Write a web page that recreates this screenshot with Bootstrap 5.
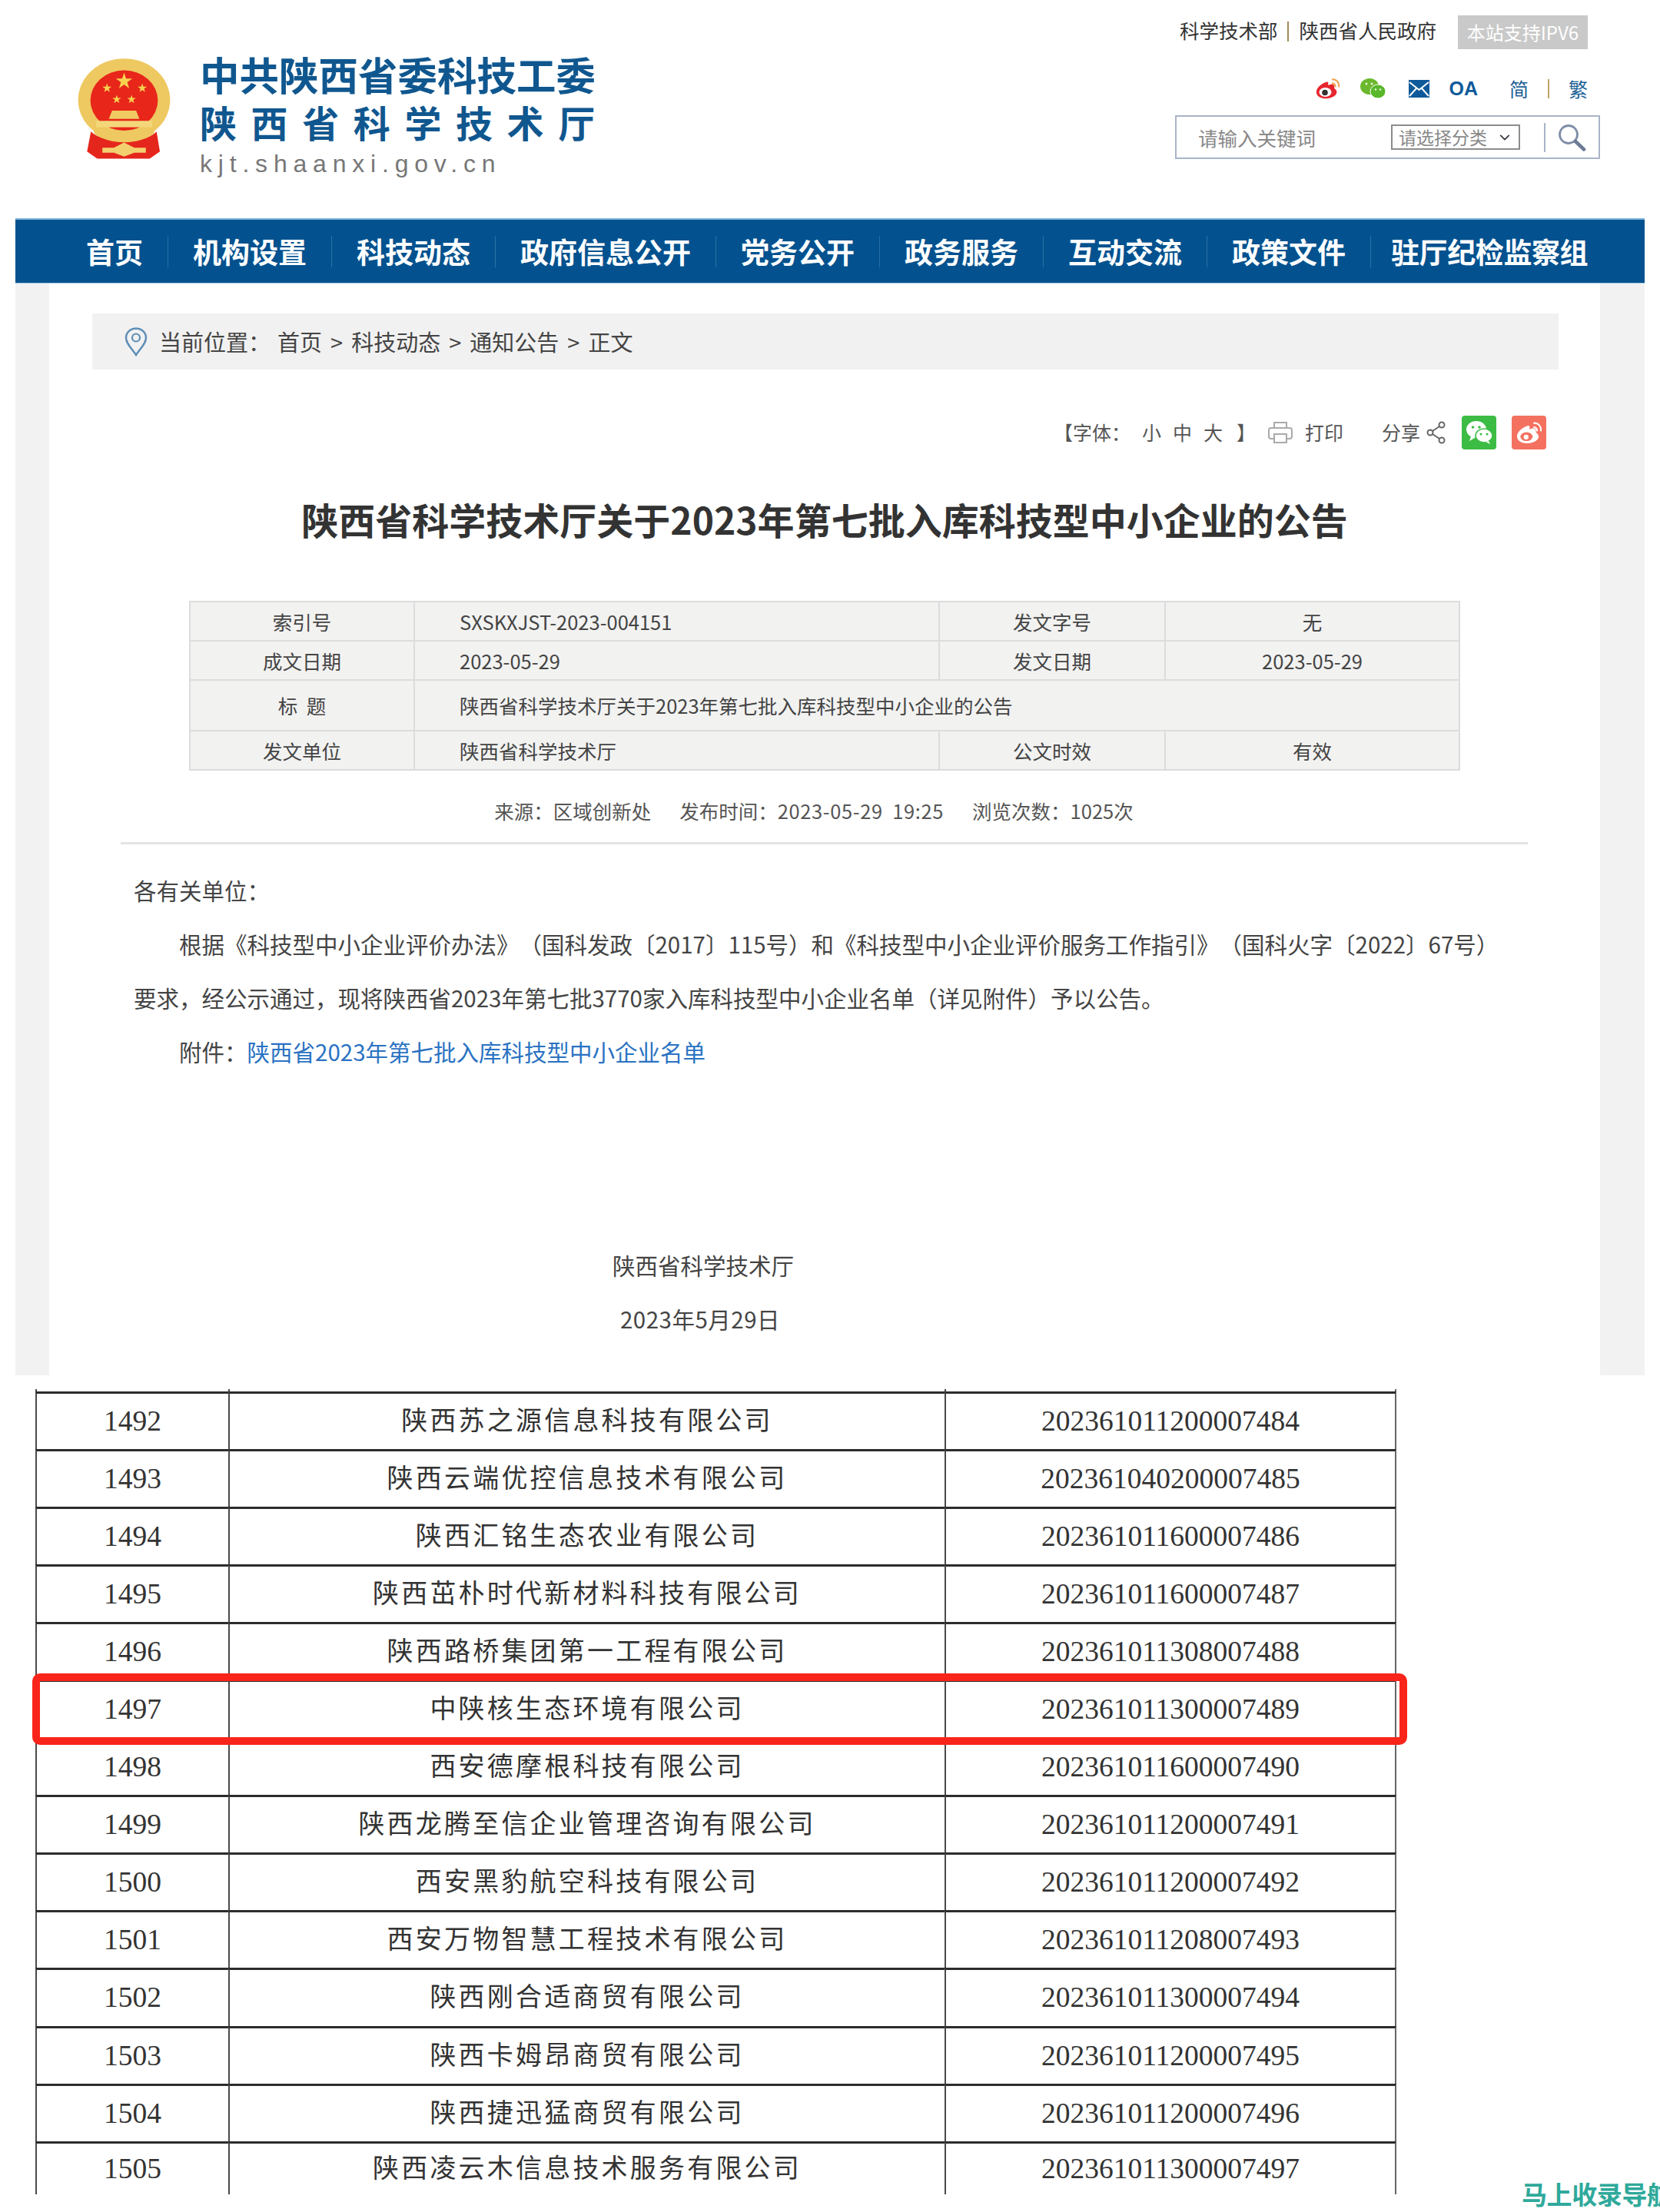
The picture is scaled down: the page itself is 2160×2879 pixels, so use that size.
<!DOCTYPE html>
<html lang="zh-CN">
<head>
<meta charset="utf-8">
<title>陕西省科学技术厅</title>
<link href="https://cdn.jsdelivr.net/npm/bootstrap@5.3.0/dist/css/bootstrap.min.css" rel="stylesheet">
<style>
html,body{margin:0;background:#fff}
body{font-family:"Noto Sans CJK SC","Liberation Sans",sans-serif;color:#444;text-spacing-trim:space-all}
a{text-decoration:none;color:inherit}
.pg{position:relative;width:2160px;height:2879px;overflow:hidden;background:#fff}
.hd{height:284px;padding:0 78px 0 100px}
.logo{padding-top:73px;gap:37px}
.emb{width:123px;height:138px;display:block}
.lg1{font-size:51.5px;line-height:51px;font-weight:700;color:#10578f;white-space:nowrap;margin-top:-3px}
.lg2{font-size:48px;line-height:50px;font-weight:700;color:#10578f;letter-spacing:18.6px;white-space:nowrap;margin-top:12px}
.lg3{font-family:"Liberation Sans",sans-serif;font-size:32px;line-height:36px;color:#777;letter-spacing:7.8px;margin-top:12px;white-space:nowrap}
.tr{width:553px}
.r1{height:44px;margin-top:20px;padding-right:16px;gap:28px;font-size:25.5px;color:#333}
.r1 .lnk{margin-top:-5px}
.r1 .bar{display:inline-block;width:2px;height:26px;background:#a08c5a;margin:0 13px;vertical-align:-4px}
.ipv{background:#c9c9c9;color:#fff;font-size:24px;line-height:44px;height:44px;width:169px;padding:0;border:0;border-radius:0}
.r2{height:30px;margin-top:36px;padding-right:16px;color:#1d5f95;font-size:25px;line-height:30px}
.r2 .ml-m{margin-left:25px}
.r2 .ml-l{margin-left:30px}
.oa{font-family:"Liberation Sans",sans-serif;font-weight:700;font-size:25px;color:#0f5a9a;line-height:30px;margin-left:25px}
.r2 .jt{margin-left:41px}
.bar2{width:2px;height:25px;background:#c0a468;margin:0 25px}
.sbox{height:57px;margin-top:20px;border:2px solid #a9b4c8;padding-left:28px}
.sinp{border:0;padding:0;font-size:25.5px;color:#888;width:250px;height:50px;border-radius:0;box-shadow:none}
.sinp::placeholder{color:#888;opacity:1}
.ssel{width:168px;height:33px;font-size:23px;line-height:27px;color:#888;border:2px solid #8c8c8c;border-radius:0;padding:0 26px 0 8px;background-position:right 8px center;background-size:20px 14px;margin-left:1px}
.ssep{width:2px;height:38px;background:#a9b4c8;margin-left:31px}
.sic{margin-left:15px;display:block}
.mnav{margin:0 20px;height:85px;background:#03528f;border-top:2px solid #7db5de;border-bottom:1px solid #9cc6e4;padding-left:60px}
.mnav a{font-size:37px;line-height:41px;font-weight:700;color:#fff;padding:0 32px;border-left:1px solid #2b6fa5;white-space:nowrap}
.mnav a:first-child{border-left:0}
.mnav a:last-child{padding-left:26px;letter-spacing:-.4px}
.side{margin:0 20px;background:#f2f2f2;padding:0 58px 0 44px}
.inner{background:#fff;height:1421px;padding-top:39px}
.crumb{margin:0 54px 0 56px;height:73px;background:#f1f1f1;padding-left:42px;font-size:29px;color:#444}
.crumb svg{margin-right:15px}
.crumb .breadcrumb{--bs-breadcrumb-margin-bottom:0;--bs-breadcrumb-item-padding-x:11px;--bs-breadcrumb-divider-color:#444;--bs-breadcrumb-item-active-color:#444;margin-left:9px}
.crumb .lab{white-space:nowrap}
.tools{height:44px;margin:60px 70px 0 0;font-size:25px;color:#555}
.tools .fs span{margin-left:15px}
.tools .fs span.cl{margin-left:18px}
.sq{width:45px;height:44px;border-radius:4px;display:flex;align-items:center;justify-content:center}
.sq.g{background:#3cbc44;margin-left:20px}
.sq.r{background:#f47160;margin-left:20px}
.ttl{font-size:48px;line-height:60px;font-weight:700;color:#333;margin:60px 0 0;text-align:center;white-space:nowrap}
.info{width:1652px;margin:77px 0 0 182px;table-layout:fixed;border-collapse:collapse;background:#f2f2f1;font-size:25.5px;color:#444}
.info td{border:2px solid #dcdcdc;padding:0;text-align:center;height:51px;vertical-align:middle;line-height:30px}
.info td.lf{text-align:left;padding-left:58px}
.info tr.tall td{height:66px}
.meta{height:36px;line-height:36px;margin-top:34px;margin-right:28px;font-size:25.5px;color:#555;gap:37px}
.meta .ts{letter-spacing:.6px}
.dv{margin:23px 94px 0 93px;border:0;border-top:3px solid #e4e4e4;opacity:1}
.art{padding:24px 0 0 110px;font-size:29.5px;line-height:70px;color:#444}
.art p{margin:0;white-space:nowrap}
.art .ind{margin-left:59px}
.art a{color:#2a72c3}
.art .sign{margin:208px 426px 0 0;text-align:center}
.art .sdate{margin-right:434px;text-align:center;letter-spacing:.5px}
.dw{margin:18px 0 0 46px;width:1771px}
.dtab{width:1771px;table-layout:fixed;border-collapse:separate;border-spacing:0;font-family:"Liberation Serif","Noto Sans CJK SC",serif;font-size:37.5px;color:#333;margin:0;--bs-table-bg:transparent}
.dtab td{padding:0;text-align:center;vertical-align:middle;height:75.05px;border:0;border-left:2px solid #4a4a4a;border-top:3px solid #2c2c2c;line-height:44px;background:transparent;box-shadow:none}
.dtab td:last-child{border-right:2px solid #666}
.dtab tr.cap td{height:3px;border-top:0;line-height:0;font-size:0}
.dtab tr.end td{height:69px}
.dtab .nm{font-size:34px;letter-spacing:3.2px}
.hl{position:absolute;left:42px;top:2178px;width:1789px;height:93px;border:10px solid #f9251a;border-radius:10px;pointer-events:none}
.wm{position:absolute;left:1980px;top:2835px;font-size:33px;line-height:40px;font-weight:700;color:#2fa99b;white-space:nowrap;letter-spacing:-.4px}
</style>
</head>
<body>
<div class="pg">
<svg width="0" height="0" class="position-absolute"><defs><polygon id="st" points="0,-1 .2245,-.309 .951,-.309 .363,.118 .588,.809 0,.382 -.588,.809 -.363,.118 -.951,-.309 -.2245,-.309"/></defs></svg>

<header class="hd d-flex justify-content-between align-items-start">
  <div class="logo d-flex align-items-start">
    <svg class="emb" viewBox="60 69 370 410" aria-hidden="true">
      <ellipse cx="245" cy="238" rx="180" ry="162" fill="#eec860"/>
      <ellipse cx="245" cy="240" rx="132" ry="118" fill="#e8261a"/>
      <path d="M115 362 L100 440 L140 468 H345 L385 440 L372 362 C330 410 160 410 115 362Z" fill="#e5261c"/>
      <g fill="#f7d250">
        <use href="#st" transform="translate(245 165) scale(34)"/>
        <use href="#st" transform="translate(178 192) scale(19)"/>
        <use href="#st" transform="translate(316 192) scale(19)"/>
        <use href="#st" transform="translate(216 236) scale(18)"/>
        <use href="#st" transform="translate(274 236) scale(18)"/>
      </g>
      <path d="M185 312 L198 280 H292 L305 312Z" fill="#efcb62"/>
      <rect x="135" y="320" width="220" height="25" fill="#f3d77a"/>
      <path d="M118 338 C165 405 325 405 372 338 L360 372 C300 415 190 415 130 372Z" fill="#eec860"/>
      <path d="M205 385 C225 360 265 360 285 385 L270 402 H220Z" fill="#eec860"/>
      <path d="M160 425 H205 L245 405 L285 425 H330 V445 H285 L245 460 L205 445 H160Z" fill="#f2d070"/>
    </svg>
    <div>
      <div class="lg1">中共陕西省委科技工委</div>
      <div class="lg2">陕西省科学技术厅</div>
      <div class="lg3">kjt.shaanxi.gov.cn</div>
    </div>
  </div>
  <div class="tr">
    <div class="r1 d-flex justify-content-end align-items-center">
      <div class="lnk text-nowrap"><a href="#">科学技术部</a><span class="bar"></span><a href="#">陕西省人民政府</a></div>
      <button type="button" class="btn ipv">本站支持IPV6</button>
    </div>
    <div class="r2 d-flex justify-content-end align-items-center">
      <svg width="34" height="28" viewBox="0 0 34 28" aria-hidden="true"><path d="M14 6C6 9 1 15 2 20c1 6 9 8 15 7 8-1 13-6 11-10-1-2-3-3-3-4 1-3-1-5-5-4-2 1-3 1-3 0 1-3 0-4.500-3-3Z" fill="#e6262e"/><ellipse cx="13.500" cy="19" rx="8" ry="6" fill="#fff"/><circle cx="13" cy="19.500" r="3.800" fill="#333"/><path d="M22 2.500c6-1 10 4 9 10M22 7.500c3-.5 5 2 4.500 5" fill="none" stroke="#f0a452" stroke-width="2.200"/></svg>
      <svg class="ml-m" width="33" height="27" viewBox="0 0 33 27" aria-hidden="true"><ellipse cx="12" cy="10.500" rx="12" ry="10.500" fill="#6cb82e"/><ellipse cx="23" cy="17" rx="10" ry="9" fill="#58b82a" stroke="#fff" stroke-width="1"/><circle cx="8" cy="7" r="1.500" fill="#e8f5d8"/><circle cx="15" cy="7" r="1.500" fill="#e8f5d8"/><circle cx="20" cy="14.500" r="1.300" fill="#e8f5d8"/><circle cx="26" cy="14.500" r="1.300" fill="#e8f5d8"/></svg>
      <svg class="ml-l" width="27" height="23" viewBox="0 0 27 23" aria-hidden="true"><rect width="27" height="23" fill="#0f5a9a"/><path d="M1 3l12.500 10L26 3M1 21l9-10M26 21l-9-10" fill="none" stroke="#fff" stroke-width="2"/></svg>
      <span class="oa">OA</span>
      <a href="#" class="jt">简</a><span class="bar2"></span><a href="#">繁</a>
    </div>
    <form class="sbox d-flex align-items-center" onsubmit="return false">
      <input class="form-control sinp" type="text" placeholder="请输入关键词">
      <select class="form-select ssel"><option>请选择分类</option></select>
      <span class="ssep"></span>
      <svg class="sic" width="38" height="36" viewBox="0 0 38 36" aria-hidden="true"><circle cx="15" cy="14" r="11.500" fill="none" stroke="#7f8ea8" stroke-width="2.800"/><path d="M24 23l11 10.500" stroke="#6d7b96" stroke-width="4.500" stroke-linecap="round"/></svg>
    </form>
  </div>
</header>

<nav class="mnav d-flex align-items-center">
  <a href="#">首页</a><a href="#">机构设置</a><a href="#">科技动态</a><a href="#">政府信息公开</a><a href="#">党务公开</a><a href="#">政务服务</a><a href="#">互动交流</a><a href="#">政策文件</a><a href="#">驻厅纪检监察组</a>
</nav>

<main class="side">
  <div class="inner">
    <div class="crumb d-flex align-items-center">
      <svg width="30" height="38" viewBox="0 0 30 38" aria-hidden="true"><path d="M15 36C9 27 2 21 2 13.500 2 6.500 8 1.500 15 1.500S28 6.500 28 13.500C28 21 21 27 15 36Z" fill="none" stroke="#5c8db5" stroke-width="2.400"/><circle cx="15" cy="13.500" r="5" fill="none" stroke="#5c8db5" stroke-width="2.200"/></svg>
      <span class="lab">当前位置&#xFF1A;</span>
      <ol class="breadcrumb" style="--bs-breadcrumb-divider:'>'">
        <li class="breadcrumb-item"><a href="#">首页</a></li>
        <li class="breadcrumb-item"><a href="#">科技动态</a></li>
        <li class="breadcrumb-item"><a href="#">通知公告</a></li>
        <li class="breadcrumb-item active">正文</li>
      </ol>
    </div>

    <div class="tools d-flex justify-content-end align-items-center text-nowrap">
      <div class="fs">【字体&#xFF1A;<span>小</span><span>中</span><span>大</span><span class="cl">】</span></div>
      <svg class="ms-3" width="32" height="30" viewBox="0 0 32 30" aria-hidden="true"><path d="M8 9V2h16v7M8 23H4a3 3 0 0 1-3-3v-8a3 3 0 0 1 3-3h24a3 3 0 0 1 3 3v8a3 3 0 0 1-3 3h-4" fill="none" stroke="#aaa" stroke-width="2"/><rect x="8" y="17" width="16" height="11" fill="none" stroke="#aaa" stroke-width="2"/></svg>
      <span class="ms-3">打印</span>
      <span style="margin-left:50px">分享</span>
      <svg class="ms-2" width="26" height="30" viewBox="0 0 26 30" aria-hidden="true"><g fill="none" stroke="#666" stroke-width="2"><circle cx="20" cy="5" r="3.500"/><circle cx="5" cy="15" r="3.500"/><circle cx="20" cy="25" r="3.500"/><path d="M17 7L8 13M8 17l9 6"/></g></svg>
      <span class="sq g"><svg width="36" height="32" viewBox="0 0 36 32" aria-hidden="true"><ellipse cx="14" cy="12" rx="13" ry="11" fill="#fff"/><path d="M7 21l-2 6 7-4Z" fill="#fff"/><ellipse cx="24" cy="20" rx="11" ry="9" fill="#fff" stroke="#3cbc44" stroke-width="1.500"/><path d="M30 27l2 4-6-3Z" fill="#fff"/><circle cx="9.500" cy="9" r="1.800" fill="#3cbc44"/><circle cx="18" cy="9" r="1.800" fill="#3cbc44"/><circle cx="20" cy="18" r="1.500" fill="#3cbc44"/><circle cx="28" cy="18" r="1.500" fill="#3cbc44"/></svg></span>
      <span class="sq r"><svg width="36" height="32" viewBox="0 0 34 28" aria-hidden="true"><path d="M14 6C6 9 1 15 2 20c1 6 9 8 15 7 8-1 13-6 11-10-1-2-3-3-3-4 1-3-1-5-5-4-2 1-3 1-3 0 1-3 0-4.500-3-3Z" fill="#fff"/><ellipse cx="13.500" cy="19" rx="7.500" ry="5.500" fill="#f47160"/><circle cx="13" cy="19.500" r="3" fill="#fff"/><path d="M22 2.500c6-1 10 4 9 10M22 7.500c3-.5 5 2 4.500 5" fill="none" stroke="#fff" stroke-width="2"/></svg></span>
    </div>

    <h1 class="ttl">陕西省科学技术厅关于2023年第七批入库科技型中小企业的公告</h1>

    <table class="info">
      <colgroup><col style="width:292px"><col style="width:683px"><col style="width:294px"><col style="width:383px"></colgroup>
      <tr><td>索引号</td><td class="lf">SXSKXJST-2023-004151</td><td>发文字号</td><td>无</td></tr>
      <tr><td>成文日期</td><td class="lf">2023-05-29</td><td>发文日期</td><td>2023-05-29</td></tr>
      <tr class="tall"><td>标 &nbsp;题</td><td class="lf" colspan="3">陕西省科学技术厅关于2023年第七批入库科技型中小企业的公告</td></tr>
      <tr><td>发文单位</td><td class="lf">陕西省科学技术厅</td><td>公文时效</td><td>有效</td></tr>
    </table>

    <div class="meta d-flex justify-content-center text-nowrap">
      <span>来源&#xFF1A;区域创新处</span><span>发布时间&#xFF1A;<span class="ts">2023-05-29&nbsp;&nbsp;19:25</span></span><span>浏览次数&#xFF1A;1025次</span>
    </div>
    <hr class="dv">

    <article class="art">
      <p>各有关单位&#xFF1A;</p>
      <p class="ind">根据《科技型中小企业评价办法》&#xFF08;国科发政〔2017〕115号&#xFF09;和《科技型中小企业评价服务工作指引》&#xFF08;国科火字〔2022〕67号&#xFF09;</p>
      <p>要求&#xFF0C;经公示通过&#xFF0C;现将陕西省2023年第七批3770家入库科技型中小企业名单&#xFF08;详见附件&#xFF09;予以公告。</p>
      <p class="ind">附件&#xFF1A;<a href="#">陕西省2023年第七批入库科技型中小企业名单</a></p>
      <p class="sign">陕西省科学技术厅</p>
      <p class="sdate">2023年5月29日</p>
    </article>
  </div>
</main>

<div class="dw">
  <table class="table dtab">
    <colgroup><col style="width:251px"><col style="width:932px"><col style="width:588px"></colgroup>
    <tr class="cap"><td></td><td></td><td></td></tr>
    <tr><td>1492</td><td class="nm">陕西苏之源信息科技有限公司</td><td>202361011200007484</td></tr>
    <tr><td>1493</td><td class="nm">陕西云端优控信息技术有限公司</td><td>202361040200007485</td></tr>
    <tr><td>1494</td><td class="nm">陕西汇铭生态农业有限公司</td><td>202361011600007486</td></tr>
    <tr><td>1495</td><td class="nm">陕西茁朴时代新材料科技有限公司</td><td>202361011600007487</td></tr>
    <tr><td>1496</td><td class="nm">陕西路桥集团第一工程有限公司</td><td>202361011308007488</td></tr>
    <tr><td>1497</td><td class="nm">中陕核生态环境有限公司</td><td>202361011300007489</td></tr>
    <tr><td>1498</td><td class="nm">西安德摩根科技有限公司</td><td>202361011600007490</td></tr>
    <tr><td>1499</td><td class="nm">陕西龙腾至信企业管理咨询有限公司</td><td>202361011200007491</td></tr>
    <tr><td>1500</td><td class="nm">西安黑豹航空科技有限公司</td><td>202361011200007492</td></tr>
    <tr><td>1501</td><td class="nm">西安万物智慧工程技术有限公司</td><td>202361011208007493</td></tr>
    <tr><td>1502</td><td class="nm">陕西刚合适商贸有限公司</td><td>202361011300007494</td></tr>
    <tr><td>1503</td><td class="nm">陕西卡姆昂商贸有限公司</td><td>202361011200007495</td></tr>
    <tr><td>1504</td><td class="nm">陕西捷迅猛商贸有限公司</td><td>202361011200007496</td></tr>
    <tr class="end"><td>1505</td><td class="nm">陕西凌云木信息技术服务有限公司</td><td>202361011300007497</td></tr>
  </table>
</div>
<div class="hl"></div>
<div class="wm">马上收录导航</div>
</div>
<script src="https://cdn.jsdelivr.net/npm/bootstrap@5.3.0/dist/js/bootstrap.bundle.min.js"></script>
</body>
</html>
